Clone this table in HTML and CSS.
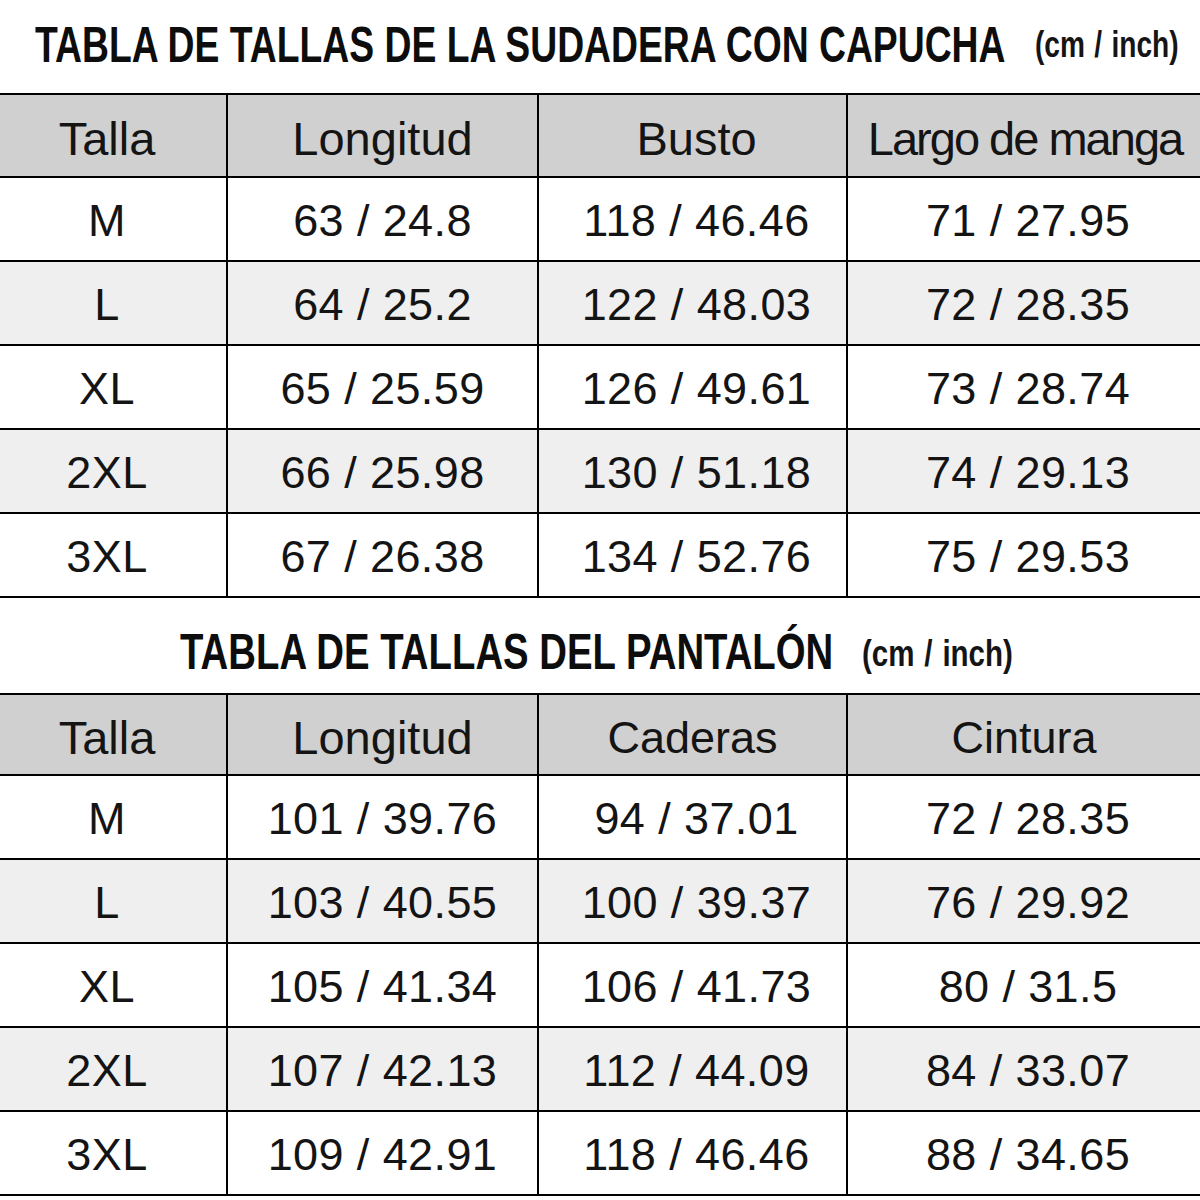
FILE: index.html
```html
<!DOCTYPE html>
<html lang="es">
<head>
<meta charset="utf-8">
<title>Tabla de tallas</title>
<link rel="stylesheet" href="styles.css">
</head>
<body>
<div class="page">
  <div class="title title-top">
    <span class="title-main w1"><span class="squeeze s1">TABLA DE TALLAS DE LA SUDADERA CON CAPUCHA</span></span><span class="unit u1"><span class="squeeze-u su1">(cm / inch)</span></span>
  </div>
  <div class="chart">
    <div class="row head">
      <div class="cell">Talla</div>
      <div class="cell">Longitud</div>
      <div class="cell">Busto</div>
      <div class="cell tight">Largo de manga</div>
    </div>
    <div class="row">
      <div class="cell">M</div>
      <div class="cell">63 / 24.8</div>
      <div class="cell">118 / 46.46</div>
      <div class="cell">71 / 27.95</div>
    </div>
    <div class="row alt">
      <div class="cell">L</div>
      <div class="cell">64 / 25.2</div>
      <div class="cell">122 / 48.03</div>
      <div class="cell">72 / 28.35</div>
    </div>
    <div class="row">
      <div class="cell">XL</div>
      <div class="cell">65 / 25.59</div>
      <div class="cell">126 / 49.61</div>
      <div class="cell">73 / 28.74</div>
    </div>
    <div class="row alt">
      <div class="cell">2XL</div>
      <div class="cell">66 / 25.98</div>
      <div class="cell">130 / 51.18</div>
      <div class="cell">74 / 29.13</div>
    </div>
    <div class="row">
      <div class="cell">3XL</div>
      <div class="cell">67 / 26.38</div>
      <div class="cell">134 / 52.76</div>
      <div class="cell">75 / 29.53</div>
    </div>
  </div>

  <div class="title title-bottom">
    <span class="title-main w2"><span class="squeeze s2">TABLA DE TALLAS DEL PANTALÓN</span></span><span class="unit u2"><span class="squeeze-u su2">(cm / inch)</span></span>
  </div>
  <div class="chart chart-2">
    <div class="row head">
      <div class="cell">Talla</div>
      <div class="cell">Longitud</div>
      <div class="cell narrow">Caderas</div>
      <div class="cell narrow">Cintura</div>
    </div>
    <div class="row">
      <div class="cell">M</div>
      <div class="cell">101 / 39.76</div>
      <div class="cell">94 / 37.01</div>
      <div class="cell">72 / 28.35</div>
    </div>
    <div class="row alt">
      <div class="cell">L</div>
      <div class="cell">103 / 40.55</div>
      <div class="cell">100 / 39.37</div>
      <div class="cell">76 / 29.92</div>
    </div>
    <div class="row">
      <div class="cell">XL</div>
      <div class="cell">105 / 41.34</div>
      <div class="cell">106 / 41.73</div>
      <div class="cell">80 / 31.5</div>
    </div>
    <div class="row alt">
      <div class="cell">2XL</div>
      <div class="cell">107 / 42.13</div>
      <div class="cell">112 / 44.09</div>
      <div class="cell">84 / 33.07</div>
    </div>
    <div class="row">
      <div class="cell">3XL</div>
      <div class="cell">109 / 42.91</div>
      <div class="cell">118 / 46.46</div>
      <div class="cell">88 / 34.65</div>
    </div>
  </div>
</div>
</body>
</html>
```
FILE: styles.css
```css
html, body {
  margin: 0;
  padding: 0;
  background: #ffffff;
}

body {
  width: 1200px;
  height: 1200px;
  overflow: hidden;
  font-family: "Liberation Sans", Arial, sans-serif;
  color: #111111;
}

.page {
  width: 1200px;
  overflow: hidden;
}

.title {
  box-sizing: border-box;
  white-space: nowrap;
  line-height: 50px;
}

.title-top {
  height: 93px;
  padding-top: 20px;
  padding-left: 35px;
}

.title-bottom {
  height: 95px;
  padding-top: 29px;
  padding-left: 180px;
}

.title-main {
  display: inline-block;
  font-size: 50px;
  font-weight: bold;
  color: #0d0d0d;
  vertical-align: baseline;
}

.w1 { width: 970px; }
.w2 { width: 650px; }

.squeeze {
  display: inline-block;
  transform-origin: left center;
}

.s1 { transform: scaleX(0.746); }
.s2 { transform: scaleX(0.767); }

.unit {
  display: inline-block;
  width: 148px;
  font-size: 36px;
  font-weight: bold;
  color: #151515;
}

.u1 { margin-left: 30px; vertical-align: 5px; }
.u2 { margin-left: 32px; vertical-align: 3px; }

.squeeze-u {
  display: inline-block;
  transform-origin: left center;
  word-spacing: 2px;
}

.su1 { transform: scaleX(0.78); }
.su2 { transform: scaleX(0.82); }

.chart {
  width: 1200px;
  border-top: 2px solid #000000;
}

.row {
  display: grid;
  grid-template-columns: 226px 311px 309px 1fr;
  height: 84px;
  box-sizing: border-box;
  border-bottom: 2px solid #000000;
  background: #ffffff;
}

.row.alt {
  background: #efefef;
}

.row.head {
  height: 83px;
  background: #d0d0d0;
}

.chart-2 .row.head {
  height: 81px;
}

.cell {
  display: flex;
  align-items: center;
  justify-content: center;
  font-size: 45px;
  letter-spacing: 0.4px;
  color: #141414;
  padding-top: 4px;
  white-space: nowrap;
}

.cell:first-child {
  padding-right: 12px;
}

.cell:nth-child(3) {
  padding-left: 8px;
}

.cell:nth-child(4) {
  padding-left: 8px;
}

.cell + .cell {
  border-left: 2px solid #000000;
}

.head .cell {
  font-size: 47px;
  letter-spacing: 0;
  padding-top: 6px;
}

.head .cell.narrow {
  font-size: 45px;
  padding-left: 0;
}

.head .cell.tight {
  letter-spacing: -2px;
  padding-left: 2px;
}
```
